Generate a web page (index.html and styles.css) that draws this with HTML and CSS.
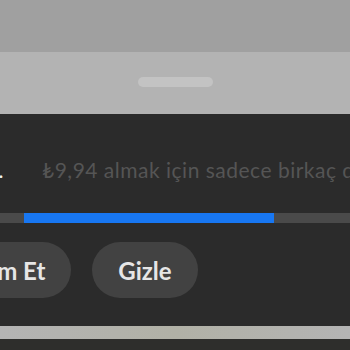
FILE: index.html
```html
<!DOCTYPE html>
<html lang="tr">
<head>
    <meta charset="UTF-8">
    <meta name="viewport" content="width=device-width, initial-scale=1.0">
    <title>Gizle</title>
    <link rel="stylesheet" href="styles.css">
</head>
<body>
    <div class="backdrop"></div>
    <div class="sheet-top">
        <div class="handle"></div>
    </div>
    <div class="panel">
        <div class="slides">
            <div class="slide slide-prev">Hediyen hazır.</div>
            <div class="slide slide-next">₺9,94 almak için sadece birkaç dakika</div>
        </div>
        <div class="progress">
            <div class="progress-fill" style="width: 250px"></div>
        </div>
        <div class="actions">
            <button class="pill pill-first">Devam Et</button>
            <button class="pill">Gizle</button>
        </div>
    </div>
    <div class="home-bar"></div>
</body>
</html>
```

FILE: styles.css
```css
      body {
          margin: 0;
          width: 350px;
          height: 350px;
          overflow: hidden;
          background: #2e2e2c;
          font-family: 'Lato', 'Noto Sans', sans-serif;
      }
      .backdrop {
          height: 52px;
          background: #a0a0a0;
      }
      .sheet-top {
          height: 62px;
          background: #b3b3b3;
          display: flex;
          justify-content: center;
      }
      .handle {
          width: 75px;
          height: 10px;
          margin-top: 25px;
          border-radius: 5px;
          background: #c3c3c3;
      }
      .panel {
          background: #2b2b2b;
          height: 212px;
          overflow: hidden;
      }
      .slides {
          display: flex;
          gap: 38px;
          padding-top: 44px;
          white-space: nowrap;
          font-size: 21px;
          letter-spacing: 0.5px;
          line-height: 24px;
      }
      .slide-prev {
          flex: 0 0 200px;
          margin-left: -196px;
          text-align: right;
          overflow: hidden;
          color: #f2f2f2;
      }
      .slide-next {
          color: #555555;
      }
      .progress {
          height: 10px;
          margin-top: 31px;
          padding-left: 24px;
          background: #4a4a4a;
      }
      .progress-fill {
          height: 100%;
          background: #1877f2;
      }
      .actions {
          display: flex;
          gap: 21px;
          margin-top: 19px;
      }
      .pill {
          flex: none;
          height: 56px;
          padding: 0 26px;
          border: none;
          border-radius: 28px;
          background: #424242;
          color: #e6e6e6;
          font-family: inherit;
          font-size: 24px;
          font-weight: bold;
          white-space: nowrap;
      }
      .pill-first {
          margin-left: -84px;
      }
      .home-bar {
          height: 13px;
          background: linear-gradient(90deg, #b4b4b4, #b1b1a6 50%, #b4b4b4);
      }
```
